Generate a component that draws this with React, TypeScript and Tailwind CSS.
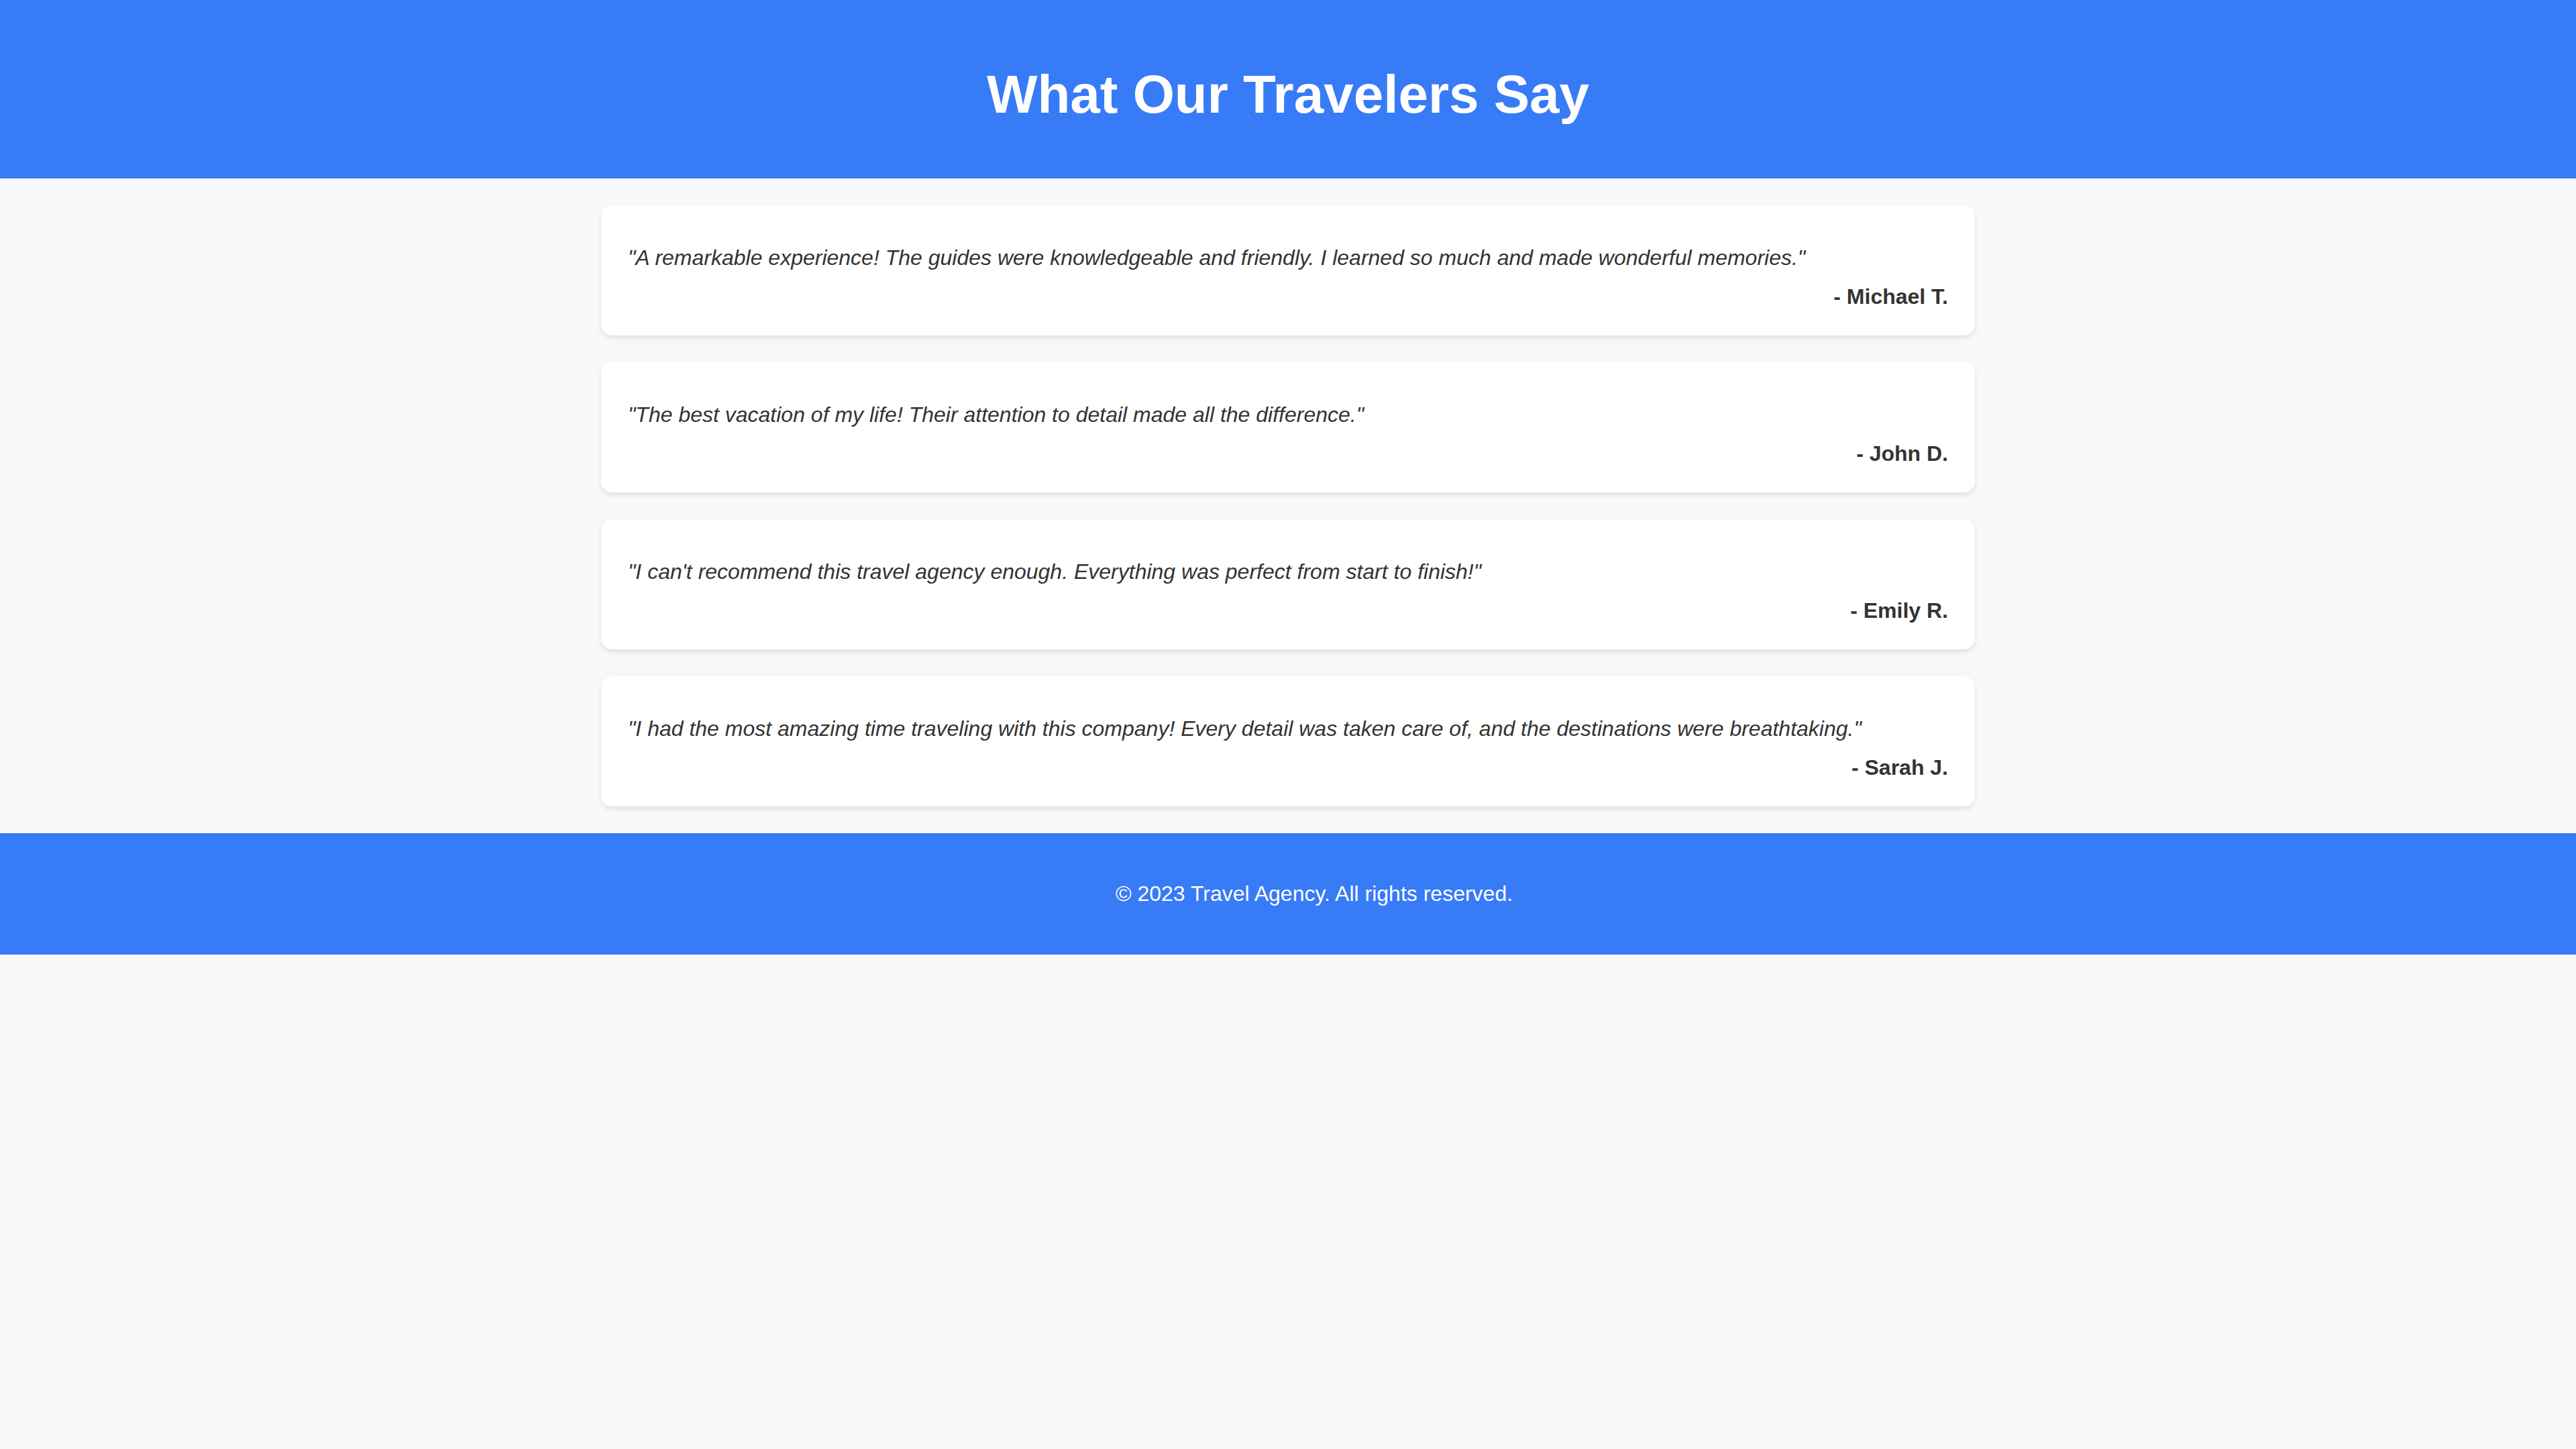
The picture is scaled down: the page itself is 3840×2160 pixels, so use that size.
const testimonials = [
  {
    quote:
      '"A remarkable experience! The guides were knowledgeable and friendly. I learned so much and made wonderful memories."',
    author: 'Michael T.',
  },
  {
    quote: '"The best vacation of my life! Their attention to detail made all the difference."',
    author: 'John D.',
  },
  {
    quote: '"I can\'t recommend this travel agency enough. Everything was perfect from start to finish!"',
    author: 'Emily R.',
  },
  {
    quote:
      '"I had the most amazing time traveling with this company! Every detail was taken care of, and the destinations were breathtaking."',
    author: 'Sarah J.',
  },
]

export default function App() {
  return (
    <div className="min-h-screen bg-[#f8f9fa] text-[#333] font-['Liberation_Sans',Arial,sans-serif]">
      <header className="h-[266px] bg-[#377bf6] pt-[94px] text-center text-white">
        <h1 className="text-[80px] font-bold leading-[94px]">What Our Travelers Say</h1>
      </header>

      <main className="mx-auto flex max-w-[2048px] flex-col gap-[40px] py-[40px]">
        {testimonials.map(t => (
          <div
            key={t.author}
            className="rounded-[16px] bg-white px-[40px] pt-[50px] pb-[30px] shadow-[0_4px_8px_rgba(0,0,0,0.1)]"
          >
            <p className="text-[32px] italic leading-[56px]">{t.quote}</p>
            <p className="mt-[2px] text-right text-[32px] font-bold leading-[56px]">- {t.author}</p>
          </div>
        ))}
      </main>

      <footer className="h-[181px] bg-[#377bf6] pt-[72px] pl-[78px] text-center text-[32px] leading-[37px] text-white">
        <p>© 2023 Travel Agency. All rights reserved.</p>
      </footer>
    </div>
  )
}
